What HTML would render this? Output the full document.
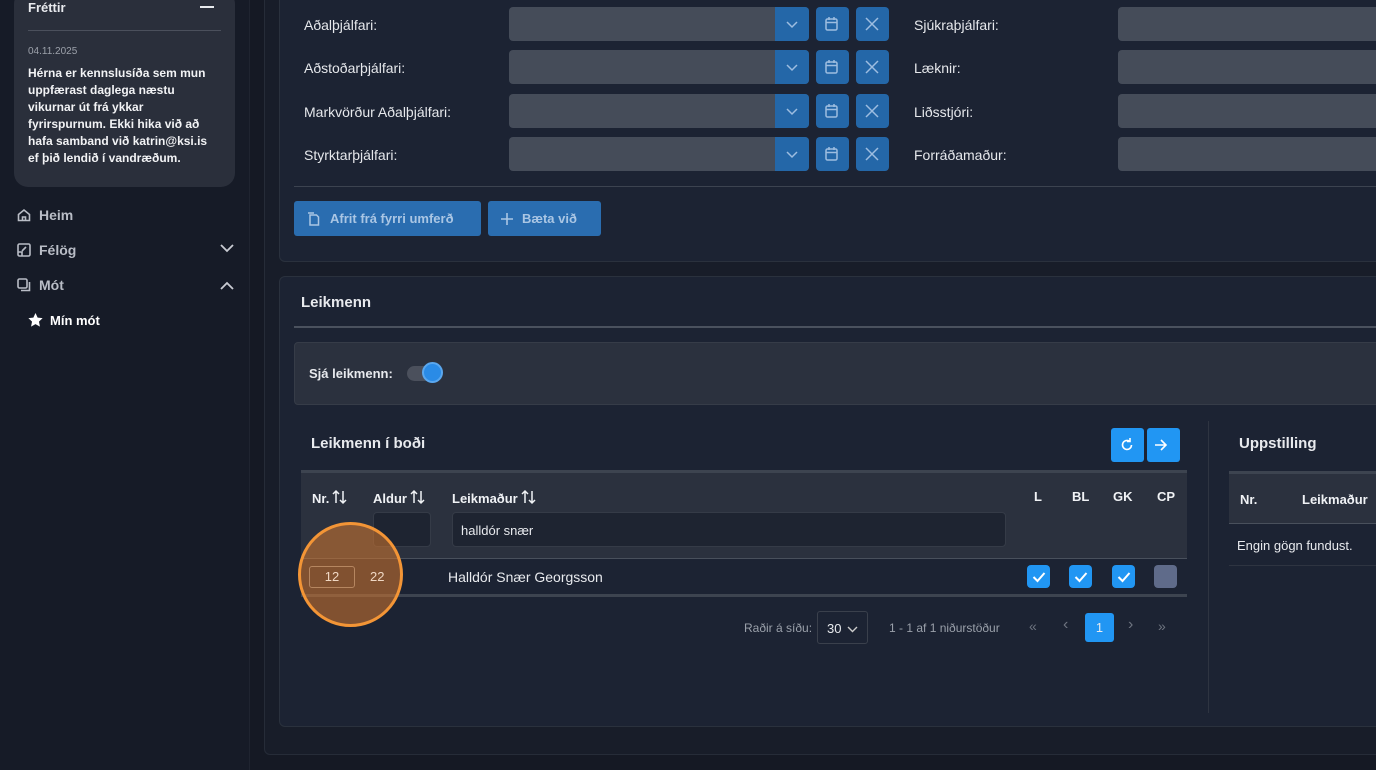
<!DOCTYPE html>
<html><head><meta charset="utf-8"><style>
*{box-sizing:border-box;margin:0;padding:0}
body{width:1376px;height:770px;overflow:hidden;background:#151924;font-family:"Liberation Sans",sans-serif;color:#e8eaee;position:relative;font-size:14px}
.abs{position:absolute}
.side{left:0;top:0;width:250px;height:770px;background:#161b27;border-right:1px solid #1f2430}
.news{left:14px;top:-10px;width:221px;height:197px;background:#2a2f3b;border-radius:14px}
.outer{left:264px;top:-10px;width:1130px;height:765px;background:#181d29;border:1px solid #262c38;border-radius:6px}
.card{background:#1c2333;border:1px solid #2a313d;border-radius:6px}
.lbl{font-size:14px;color:#e6e8ec}
.inp{background:#454c59;border-radius:4px;height:34px}
.bb{background:#2467a8;border-radius:4px}
.btn{background:#2a6db0;border-radius:3px;color:#aac6e4;font-weight:bold;font-size:13px;display:flex;align-items:center;gap:8px;padding-left:12px}
.nav{font-weight:bold;font-size:14px;color:#b9bdc6}
.cb{width:23px;height:23px;border-radius:4px;background:#2196f3;display:flex;align-items:center;justify-content:center}
.th{font-weight:bold;font-size:13px;color:#f0f2f5}
.srt{display:inline-block;vertical-align:-2px;margin-left:3px}
</style></head><body>
<div class="abs side"></div>
<div class="abs news"></div>
<div class="abs" style="left:28px;top:0;font-weight:bold;font-size:13px">Fréttir</div>
<div class="abs" style="left:200px;top:6px;width:14px;height:2px;background:#e8eaee"></div>
<div class="abs" style="left:28px;top:30px;width:193px;height:1px;background:#4b505c"></div>
<div class="abs" style="left:28px;top:46px;font-size:10px;color:#9ca1aa">04.11.2025</div>
<div class="abs" style="left:28px;top:65px;width:188px;font-size:12px;font-weight:bold;line-height:17px;color:#f2f3f5">Hérna er kennslusíða sem mun uppfærast daglega næstu vikurnar út frá ykkar fyrirspurnum. Ekki hika við að hafa samband við katrin@ksi.is ef þið lendið í vandræðum.</div>
<svg class="abs" style="left:17px;top:208px" width="14" height="14" viewBox="0 0 14 14" fill="none" stroke="#b9bdc6" stroke-width="1.6"><path d="M1.5 6.5L7 2l5.5 4.5V12.5h-11z M5.5 12.5V9h3v3.5"/></svg>
<div class="abs nav" style="left:39px;top:207px">Heim</div>
<svg class="abs" style="left:17px;top:243px" width="14" height="14" viewBox="0 0 14 14" fill="none" stroke="#b9bdc6" stroke-width="1.6"><rect x="1" y="1" width="12" height="12" rx="1.5"/><path d="M5 8l4-4M1 9h4v4"/></svg>
<div class="abs nav" style="left:39px;top:242px">Félög</div>
<svg class="abs" style="left:220px;top:244px" width="14" height="9" viewBox="0 0 14 9" fill="none" stroke="#c9ccd3" stroke-width="1.8"><path d="M1 1l6 6 6-6"/></svg>
<svg class="abs" style="left:17px;top:278px" width="14" height="14" viewBox="0 0 14 14" fill="none" stroke="#b9bdc6" stroke-width="1.6"><rect x="1" y="1" width="9" height="9" rx="1.5"/><path d="M4 12.5h8.5V4"/></svg>
<div class="abs nav" style="left:39px;top:277px">Mót</div>
<svg class="abs" style="left:220px;top:281px" width="14" height="9" viewBox="0 0 14 9" fill="none" stroke="#c9ccd3" stroke-width="1.8"><path d="M1 8l6-6 6 6"/></svg>
<svg class="abs" style="left:28px;top:313px" width="15" height="14" viewBox="0 0 24 23"><path fill="#fff" d="M12 0l3.5 7.5 8.2 1-6 5.7 1.6 8.1L12 18.3l-7.3 4 1.6-8.1-6-5.7 8.2-1z"/></svg>
<div class="abs" style="left:50px;top:313px;font-weight:bold;font-size:13px;color:#fff">Mín mót</div>

<div class="abs outer"></div>
<div class="abs card" style="left:279px;top:-10px;width:1110px;height:272px;border-top:none"></div>
<div class="abs" style="left:294px;top:186px;width:1090px;height:1px;background:#3c4350"></div>
<div class="abs lbl" style="left:304px;top:17px">Aðalþjálfari:</div>
<div class="abs lbl" style="left:304px;top:60px">Aðstoðarþjálfari:</div>
<div class="abs lbl" style="left:304px;top:104px">Markvörður Aðalþjálfari:</div>
<div class="abs lbl" style="left:304px;top:147px">Styrktarþjálfari:</div>
<div class="abs lbl" style="left:914px;top:17px">Sjúkraþjálfari:</div>
<div class="abs lbl" style="left:914px;top:60px">Læknir:</div>
<div class="abs lbl" style="left:914px;top:104px">Liðsstjóri:</div>
<div class="abs lbl" style="left:914px;top:147px">Forráðamaður:</div>

<div class="abs inp" style="left:509px;top:7px;width:300px"></div>
<div class="abs inp" style="left:509px;top:50px;width:300px"></div>
<div class="abs inp" style="left:509px;top:94px;width:300px"></div>
<div class="abs inp" style="left:509px;top:137px;width:300px"></div>
<div class="abs inp" style="left:1118px;top:7px;width:270px"></div>
<div class="abs inp" style="left:1118px;top:50px;width:270px"></div>
<div class="abs inp" style="left:1118px;top:94px;width:270px"></div>
<div class="abs inp" style="left:1118px;top:137px;width:270px"></div>

<div class="abs bb" style="left:775px;top:7px;width:34px;height:34px;border-radius:0 4px 4px 0"></div>
<div class="abs bb" style="left:775px;top:50px;width:34px;height:34px;border-radius:0 4px 4px 0"></div>
<div class="abs bb" style="left:775px;top:94px;width:34px;height:34px;border-radius:0 4px 4px 0"></div>
<div class="abs bb" style="left:775px;top:137px;width:34px;height:34px;border-radius:0 4px 4px 0"></div>
<div class="abs bb" style="left:816px;top:7px;width:33px;height:34px"></div>
<div class="abs bb" style="left:816px;top:50px;width:33px;height:34px"></div>
<div class="abs bb" style="left:816px;top:94px;width:33px;height:34px"></div>
<div class="abs bb" style="left:816px;top:137px;width:33px;height:34px"></div>
<div class="abs bb" style="left:856px;top:7px;width:33px;height:34px"></div>
<div class="abs bb" style="left:856px;top:50px;width:33px;height:34px"></div>
<div class="abs bb" style="left:856px;top:94px;width:33px;height:34px"></div>
<div class="abs bb" style="left:856px;top:137px;width:33px;height:34px"></div>
<svg class="abs" style="left:775px;top:7px" width="114" height="170" viewBox="0 0 114 170" fill="none" stroke="#9dbde0" stroke-width="1.5">
<g id="ic"><path d="M12 15l5 5 5-5"/><rect x="51" y="12" width="11" height="11" rx="1.5"/><path d="M51 15.5h11M54 10v3M59 10v3"/><path d="M91 11l12 12M103 11L91 23"/></g>
<use href="#ic" y="43"/><use href="#ic" y="87"/><use href="#ic" y="130"/>
</svg>

<div class="abs btn" style="left:294px;top:201px;width:187px;height:35px"><svg width="14" height="14" viewBox="0 0 14 14" fill="none" stroke="#aac6e4" stroke-width="1.5"><path d="M4 3h6.5l2 2v8H4z M2 1h6"/></svg><span style="margin-left:2px">Afrit frá fyrri umferð</span></div>
<div class="abs btn" style="left:488px;top:201px;width:113px;height:35px"><svg width="14" height="14" viewBox="0 0 14 14" fill="none" stroke="#aac6e4" stroke-width="1.6"><path d="M7 1v12M1 7h12"/></svg><span>Bæta við</span></div>

<div class="abs card" style="left:279px;top:276px;width:1110px;height:451px"></div>
<div class="abs" style="left:301px;top:294px;font-weight:bold;font-size:15px">Leikmenn</div>
<div class="abs" style="left:294px;top:326px;width:1090px;height:2px;background:#4a515e"></div>
<div class="abs" style="left:294px;top:342px;width:1090px;height:63px;background:#2b313e;border:1px solid #363c48;border-radius:4px"></div>
<div class="abs" style="left:309px;top:366px;font-weight:bold;font-size:13px">Sjá leikmenn:</div>
<div class="abs" style="left:407px;top:366px;width:28px;height:15px;border-radius:8px;background:#4b505c"></div>
<div class="abs" style="left:422px;top:362px;width:21px;height:21px;border-radius:50%;background:#2a8be6;border:2px solid #5aa7ee"></div>

<div class="abs" style="left:311px;top:435px;font-weight:bold;font-size:15px">Leikmenn í boði</div>
<div class="abs" style="left:1111px;top:428px;width:33px;height:34px;background:#2196f3;border-radius:3px"></div>
<div class="abs" style="left:1147px;top:428px;width:33px;height:34px;background:#2196f3;border-radius:3px"></div>
<svg class="abs" style="left:1111px;top:428px" width="70" height="34" viewBox="0 0 70 34" fill="none" stroke="#fff" stroke-width="1.6"><path d="M20.5 17a4.5 4.5 0 1 1-2-3.8M19 10v3.5h-3"/><path d="M44 17h11M50 12l5 5-5 5"/></svg>

<div class="abs" style="left:301px;top:470px;width:886px;height:89px;background:#2b313e;border-top:3px solid #3d4450;border-bottom:1px solid #49505c"></div>
<svg width="0" height="0" style="position:absolute"><defs><g id="so" fill="none" stroke="#f0f2f5" stroke-width="1.5"><path d="M4 14V2M1 5l3-3 3 3M11 2v12M8 11l3 3 3-3"/></g></defs></svg>
<div class="abs th" style="left:312px;top:489px">Nr.<svg class="srt" width="15" height="16"><use href="#so"/></svg></div>
<div class="abs th" style="left:373px;top:489px">Aldur<svg class="srt" width="15" height="16"><use href="#so"/></svg></div>
<div class="abs th" style="left:452px;top:489px">Leikmaður<svg class="srt" width="15" height="16"><use href="#so"/></svg></div>
<div class="abs th" style="left:1034px;top:489px">L</div>
<div class="abs th" style="left:1072px;top:489px">BL</div>
<div class="abs th" style="left:1113px;top:489px">GK</div>
<div class="abs th" style="left:1157px;top:489px">CP</div>
<div class="abs" style="left:373px;top:512px;width:58px;height:35px;background:#1e2431;border:1px solid #353b47;border-radius:4px"></div>
<div class="abs" style="left:452px;top:512px;width:554px;height:35px;background:#1e2431;border:1px solid #353b47;border-radius:4px;padding:10px 0 0 8px;font-size:13px">halldór snær</div>
<div class="abs" style="left:301px;top:594px;width:886px;height:3px;background:#3d4450"></div>
<div class="abs" style="left:448px;top:569px;font-size:14px">Halldór Snær Georgsson</div>
<div class="abs cb" style="left:1027px;top:565px"><svg width="14" height="12" viewBox="0 0 14 12" fill="none" stroke="#fff" stroke-width="2"><path d="M1.5 6l4 4 7-8"/></svg></div>
<div class="abs cb" style="left:1069px;top:565px"><svg width="14" height="12" viewBox="0 0 14 12" fill="none" stroke="#fff" stroke-width="2"><path d="M1.5 6l4 4 7-8"/></svg></div>
<div class="abs cb" style="left:1112px;top:565px"><svg width="14" height="12" viewBox="0 0 14 12" fill="none" stroke="#fff" stroke-width="2"><path d="M1.5 6l4 4 7-8"/></svg></div>
<div class="abs cb" style="left:1154px;top:565px;background:#5f6b8a"></div>
<div class="abs" style="left:298px;top:522px;width:105px;height:105px;border-radius:50%;background:rgba(214,120,45,0.55);border:3px solid #f39536"></div>
<div class="abs" style="left:309px;top:566px;width:46px;height:22px;border:1px solid #b68660;border-radius:3px;text-align:center;font-size:13px;line-height:20px;color:#f0d8c4">12</div>
<div class="abs" style="left:370px;top:569px;font-size:13px;color:#f0d8c4">22</div>

<div class="abs" style="left:744px;top:621px;font-size:12px;color:#9aa0aa">Raðir á síðu:</div>
<div class="abs" style="left:817px;top:611px;width:51px;height:33px;border:1px solid #3a404c;border-radius:3px;font-size:13px;padding:9px 0 0 9px">30<svg style="margin-left:6px" width="11" height="7" viewBox="0 0 11 7" fill="none" stroke="#ccc" stroke-width="1.4"><path d="M1 1l4.5 4.5L10 1"/></svg></div>
<div class="abs" style="left:889px;top:621px;font-size:12px;color:#9aa0aa">1 - 1 af 1 niðurstöður</div>
<div class="abs" style="left:1029px;top:618px;font-size:14px;color:#6e7480">«</div>
<div class="abs" style="left:1063px;top:616px;font-size:16px;color:#6e7480">‹</div>
<div class="abs" style="left:1085px;top:613px;width:29px;height:29px;background:#2196f3;border-radius:3px;text-align:center;line-height:29px;font-size:13px">1</div>
<div class="abs" style="left:1128px;top:616px;font-size:16px;color:#6e7480">›</div>
<div class="abs" style="left:1158px;top:618px;font-size:14px;color:#6e7480">»</div>

<div class="abs" style="left:1208px;top:421px;width:1px;height:292px;background:#2e3441"></div>
<div class="abs" style="left:1239px;top:435px;font-weight:bold;font-size:15px">Uppstilling</div>
<div class="abs" style="left:1229px;top:471px;width:160px;height:53px;background:#2b313e;border-top:3px solid #3d4450;border-bottom:1px solid #49505c"></div>
<div class="abs th" style="left:1240px;top:492px">Nr.</div>
<div class="abs th" style="left:1302px;top:492px">Leikmaður</div>
<div class="abs" style="left:1237px;top:538px;font-size:13px">Engin gögn fundust.</div>
<div class="abs" style="left:1229px;top:565px;width:160px;height:1px;background:#2e3441"></div>
</body></html>
